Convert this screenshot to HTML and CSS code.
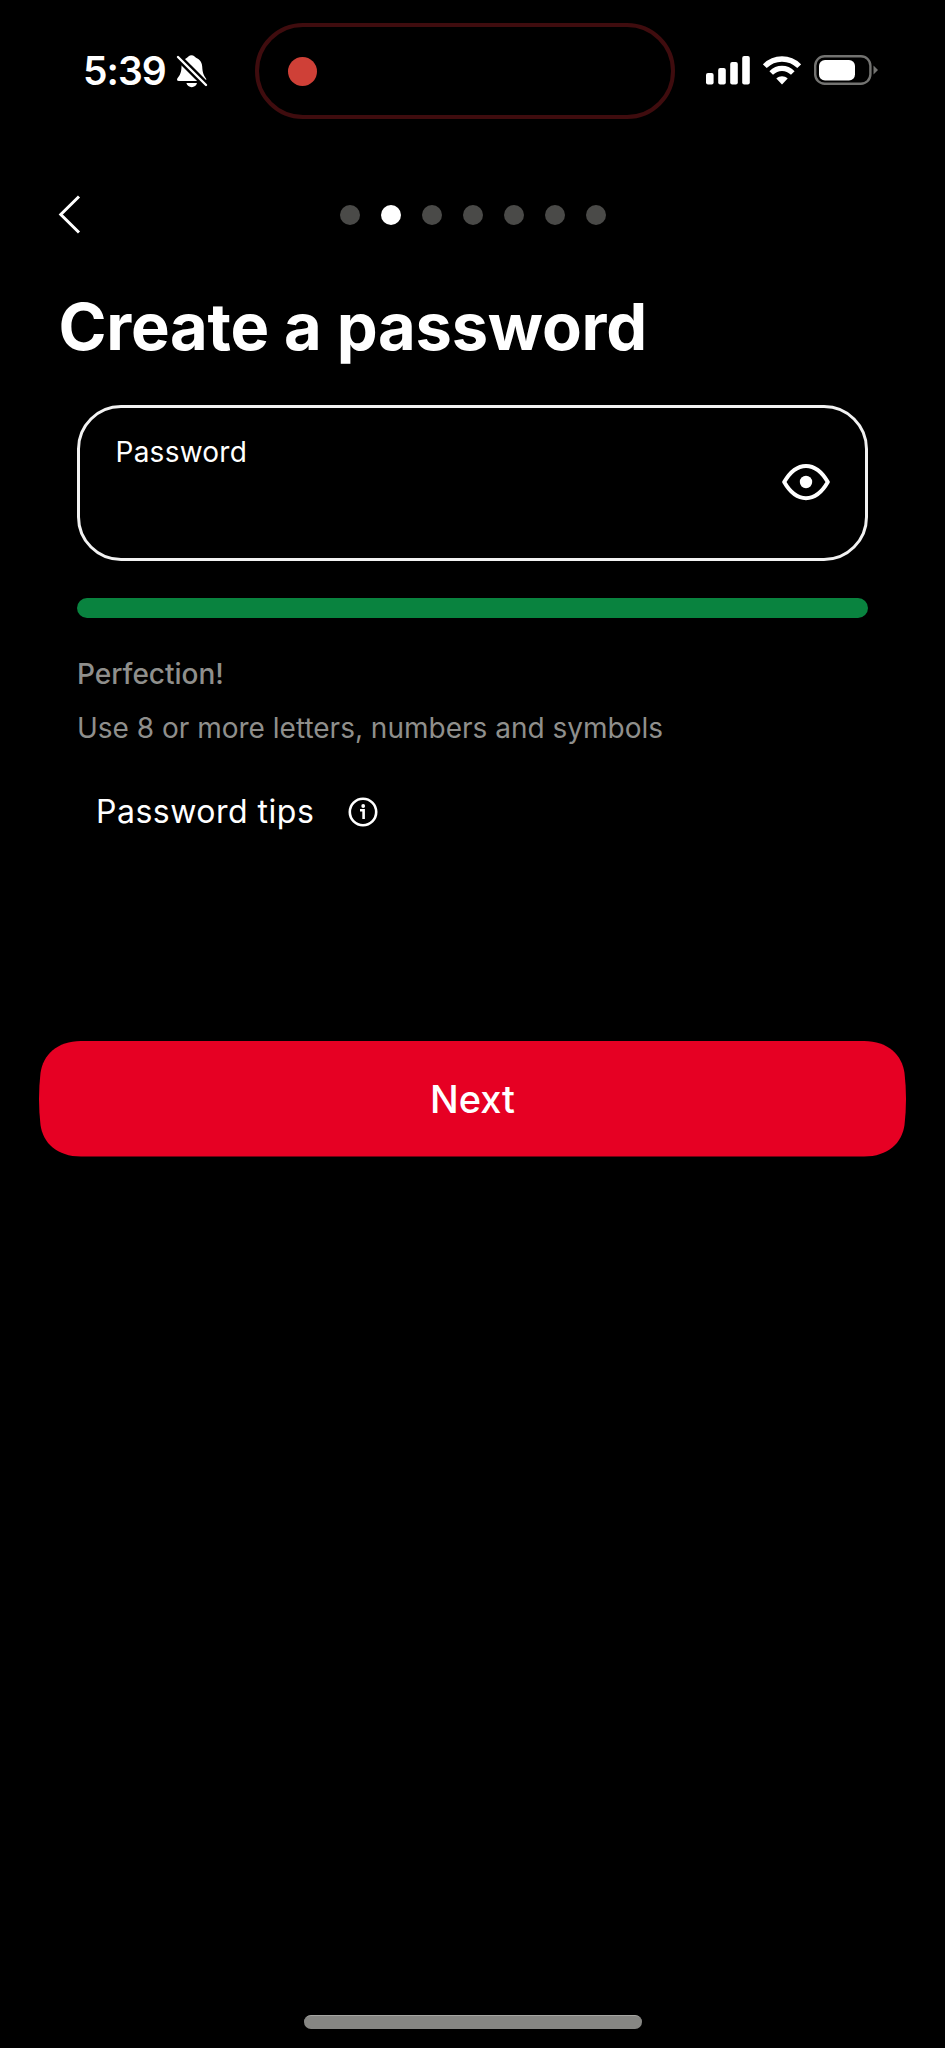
FILE: index.html
```html
<!DOCTYPE html>
<html lang="en">
<head>
<meta charset="utf-8">
<title>Create a password</title>
<link rel="stylesheet" href="styles.css">
</head>
<body>
<div class="screen">
  <header class="status-bar">
    <div class="clock">
      <span class="time">5:39</span>
      <svg class="bell" width="32" height="34" viewBox="0 0 32 34">
        <path fill="#fff" d="M15.5 1.2C17.9 1.2 19 3 20 3.700C24 5.200 26 8.600 26.200 12.500C26.500 18.500 27.500 21 30 24.500Q31 27 28.500 27H3Q.3 27 1.300 24.500C4.500 20.500 5.300 18 5.500 12.500C5.600 8.600 7.500 5.200 11 3.700C12 3 13.100 1.200 15.500 1.200ZM10.400 29H21C20 34.500 11.500 34.500 10.400 29Z"/>
        <path stroke="#000" stroke-width="7" d="M0 1L32 33"/>
        <path stroke="#fff" stroke-width="2.400" stroke-linecap="round" d="M2 3L30 31"/>
      </svg>
    </div>
    <div class="island"><span class="record"></span></div>
    <div class="indicators">
      <svg class="signal" width="44" height="30" viewBox="0 0 44 30" fill="#fff">
        <rect x="0" y="18" width="7.600" height="11.500" rx="2"/>
        <rect x="12.200" y="13" width="7.600" height="16.500" rx="2"/>
        <rect x="24.200" y="7" width="7.600" height="22.500" rx="2"/>
        <rect x="36.200" y="1" width="7.600" height="28.500" rx="2"/>
      </svg>
      <svg class="wifi" width="38" height="30" viewBox="0 0 38 30" fill="none" stroke="#fff">
        <path stroke-width="5.400" d="M1.800 11.200C11.500 1.600 26.500 1.600 36.200 11.200"/>
        <path stroke-width="5.200" d="M8.200 18C14.500 11.900 23.500 11.900 29.800 18"/>
        <path fill="#fff" stroke="none" d="M19 29.500L13.300 23.500C16.700 20.600 21.300 20.600 24.700 23.500Z"/>
      </svg>
      <svg class="battery" width="64" height="30" viewBox="0 0 64 30">
        <rect x="1.200" y="1.200" width="55.200" height="27.600" rx="9.500" fill="none" stroke="#737371" stroke-width="2.400"/>
        <rect x="5" y="5" width="36" height="20.500" rx="6" fill="#fff"/>
        <path fill="#737371" d="M59.500 10.500L64 15L59.500 19.500Z"/>
      </svg>
    </div>
  </header>

  <nav class="steps">
    <svg class="back" width="24" height="40" viewBox="0 0 24 40" fill="none" stroke="#fff" stroke-width="3"><path d="M21 1.500L2.800 19.500L21 37.500"/></svg>
    <div class="dots"><i></i><i class="on"></i><i></i><i></i><i></i><i></i><i></i></div>
  </nav>

  <h1 class="title">Create a password</h1>

  <main class="form">
    <div class="field">
      <span class="label">Password</span>
      <svg class="eye" width="48" height="38" viewBox="0 0 48 38">
        <path fill="none" stroke="#fff" stroke-width="4" stroke-linejoin="round" d="M2.200 19C14.500-2.500 33.500-2.500 45.800 19C33.500 40.500 14.500 40.500 2.200 19Z"/>
        <circle cx="24" cy="19" r="6.200" fill="#fff"/>
      </svg>
    </div>
    <div class="meter"></div>
    <p class="strength">Perfection!</p>
    <p class="hint">Use 8 or more letters, numbers and symbols</p>
    <div class="tips">
      <span class="tips-text">Password tips</span>
      <svg width="30" height="30" viewBox="0 0 30 30" fill="none" stroke="#fff">
        <circle cx="15" cy="15" r="13.200" stroke-width="2.600"/>
        <path stroke-width="2.600" d="M12 13.300H15.600V22"/>
        <circle cx="15.200" cy="9" r="1.900" fill="#fff" stroke="none"/>
      </svg>
    </div>
  </main>

  <div class="next">
    <svg class="next-shape" width="867" height="116" viewBox="0 0 867 116"><path fill="#e60023" d="M42 0H825C849 0 863 14 865.500 32Q868.500 58 865.500 84C863 102 849 115.500 825 115.500H42C18 115.500 4 102 1.500 84Q-1.500 58 1.500 32C4 14 18 0 42 0Z"/></svg>
    <span class="next-text">Next</span>
  </div>
  <div class="home"></div>
</div>
</body>
</html>
```
FILE: styles.css
```css
* { box-sizing: border-box; }
body { margin: 0; background: #000; color: #fff; font-family: Inter, "Liberation Sans", sans-serif; }
.screen { width: 945px; height: 2048px; display: flex; flex-direction: column; overflow: hidden; background: #000; }
svg { display: block; flex: none; }

.status-bar { display: flex; height: 96px; margin-top: 23px; flex: none; }
.clock { width: 255px; padding: 31px 0 0 83px; display: flex; gap: 11px; }
.time { width: 82px; font-size: 39px; line-height: 34px; font-weight: 600; letter-spacing: -1px; white-space: nowrap; }
.island { width: 420px; height: 96px; border: 4px solid #3f0c0e; border-radius: 48px; padding: 29.500px 0 0 29px; }
.record { display: block; width: 29px; height: 29px; border-radius: 50%; background: #cf4037; }
.indicators { display: flex; padding: 32px 0 0 31px; }
.wifi { margin-left: 13px; }
.battery { margin-left: 13px; }

.steps { display: flex; align-items: center; height: 42px; margin-top: 75px; padding-left: 58px; flex: none; }
.back { margin-top: -1px; }
.dots { display: flex; gap: 20.900px; margin-left: 258.300px; }
.dots i { width: 20px; height: 20px; border-radius: 50%; background: #4a4a48; }
.dots .on { background: #fff; }

.title { margin: 51px 0 0 58.500px; height: 80px; font-size: 65px; line-height: 80px; font-weight: 700; letter-spacing: -0.250px; white-space: nowrap; flex: none; }

.form { margin: 38px 77px 0; flex: none; }
.field { display: flex; justify-content: space-between; height: 156px; border: 3px solid #f2f2f2; border-radius: 44px; padding: 26px 35px 0 35.500px; }
.label { font-size: 28px; line-height: 36px; letter-spacing: 0.250px; white-space: nowrap; }
.eye { margin-top: 29px; }
.meter { height: 20px; margin-top: 37px; border-radius: 10px; background: #09833f; }
.strength, .hint { margin: 0; color: #8f8f8c; font-size: 28px; line-height: 36px; height: 36px; white-space: nowrap; }
.strength { margin-top: 38px; font-weight: 500; }
.hint { margin-top: 18px; }
.tips { display: flex; align-items: center; margin: 46px 0 0 19px; height: 40px; }
.tips-text { width: 252px; font-size: 32px; line-height: 40px; letter-spacing: 0.500px; white-space: nowrap; }

.next { display: grid; width: 867px; height: 116px; margin: 209px 0 0 39px; flex: none; }
.next-shape, .next-text { grid-area: 1 / 1; }
.next-text { font-size: 38px; font-weight: 500; line-height: 117px; text-align: center; }
.home { width: 338px; height: 14px; margin: auto 0 19px 304px; border-radius: 7px; background: #868683; border-top: 1px solid #a5a5a2; flex: none; }
```
